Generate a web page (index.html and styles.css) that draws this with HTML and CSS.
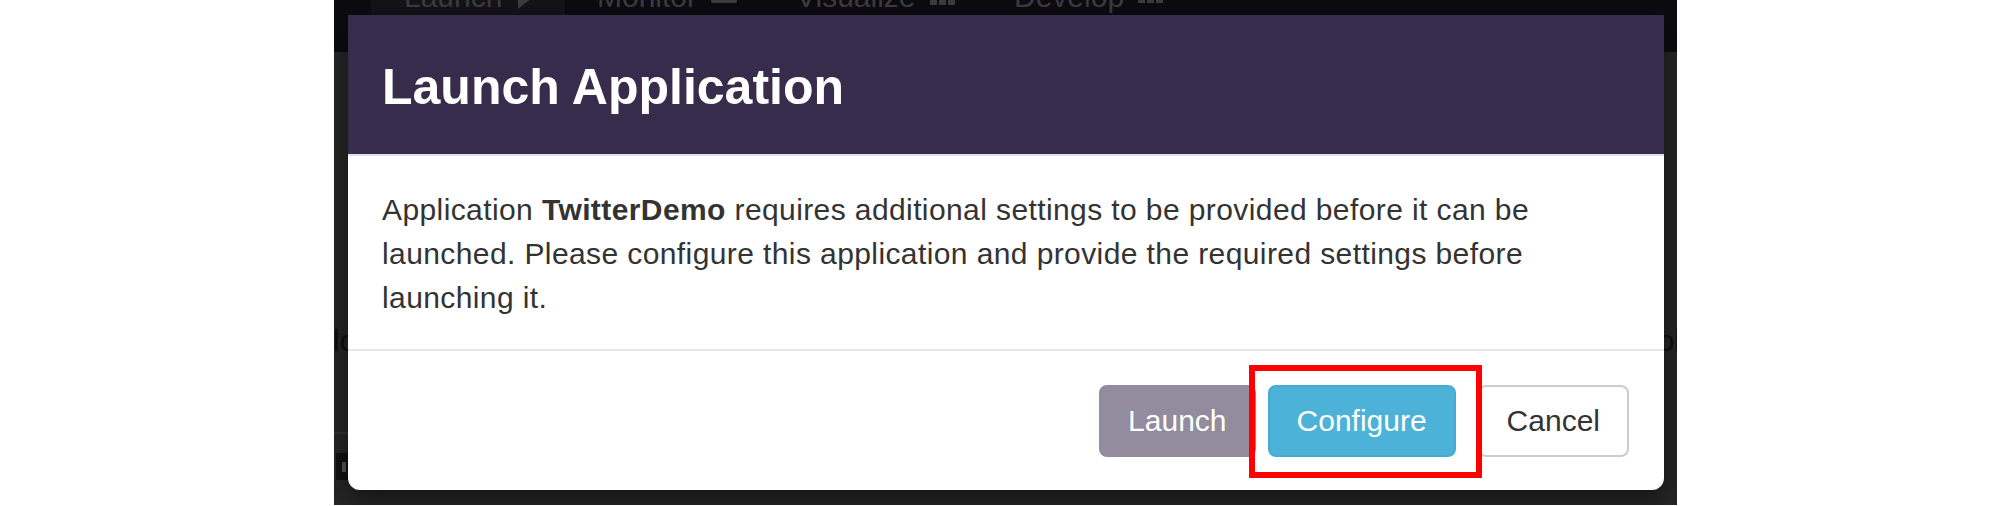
FILE: index.html
```html
<!DOCTYPE html>
<html lang="en">
<head>
<meta charset="utf-8">
<title>Launch Application</title>
<link rel="stylesheet" href="styles.css">
</head>
<body>
<div class="screen">
  <div class="navbar">
    <div class="nav-item nav-active w1"><span class="nav-label">Launch <svg class="nav-icon" width="16" height="22" viewBox="0 0 16 22"><path d="M1 0 L15 11 L1 22 Z" fill="#3d3c42"/></svg></span></div>
    <div class="nav-item w2"><span class="nav-label">Monitor <svg class="nav-icon" width="26" height="22" viewBox="0 0 26 22"><rect x="0" y="2" width="26" height="14" rx="2" fill="#3d3c42"/></svg></span></div>
    <div class="nav-item w3"><span class="nav-label">Visualize <svg class="nav-icon" width="26" height="22" viewBox="0 0 26 22"><rect x="0" y="4" width="7" height="14" fill="#3d3c42"/><rect x="9" y="0" width="7" height="18" fill="#3d3c42"/><rect x="18" y="6" width="7" height="12" fill="#3d3c42"/></svg></span></div>
    <div class="nav-item w4"><span class="nav-label">Develop <svg class="nav-icon" width="26" height="22" viewBox="0 0 26 22"><rect x="0" y="6" width="7" height="10" fill="#3d3c42"/><rect x="9" y="6" width="7" height="10" fill="#3d3c42"/><rect x="18" y="6" width="7" height="10" fill="#3d3c42"/></svg></span></div>
  </div>
  <div class="page">
    <div class="page-row">
      <span class="page-text">lo</span>
      <span class="page-text">ol</span>
    </div>
    <div class="page-rule"></div>
    <div class="page-block"><span class="page-chip"></span></div>
  </div>

  <div class="modal">
    <div class="modal-header">
      <h4 class="modal-title">Launch Application</h4>
    </div>
    <div class="modal-body">
      <p class="modal-text">Application <strong>TwitterDemo</strong> requires additional settings to be provided before it can be launched. Please configure this application and provide the required settings before launching it.</p>
    </div>
    <div class="modal-footer">
      <button class="btn btn-launch">Launch</button>
      <span class="highlight-wrap">
        <button class="btn btn-configure">Configure</button>
        <span class="highlight"></span>
      </span>
      <button class="btn btn-cancel">Cancel</button>
    </div>
  </div>
</div>
</body>
</html>
```

FILE: styles.css
```css
html, body {
  margin: 0;
  padding: 0;
}
body {
  background: #ffffff;
  width: 2013px;
  height: 506px;
  overflow: hidden;
  font-family: "Liberation Sans", Arial, Helvetica, sans-serif;
}
.screen {
  margin-left: 334px;
  width: 1343px;
  height: 505px;
  background: #262626;
  position: relative;
  overflow: hidden;
}
.navbar {
  height: 52px;
  background: #0c0b10;
  display: flex;
  padding-left: 37px;
}
.nav-item {
  height: 52px;
  padding-left: 33px;
  box-sizing: border-box;
  overflow: hidden;
}
.nav-active {
  background: #141318;
}
.w1 { width: 194px; }
.w2 { width: 199px; padding-left: 32px; }
.w3 { width: 218px; padding-left: 32px; }
.w4 { width: 200px; padding-left: 32px; }
.nav-label {
  display: block;
  margin-top: -20px;
  font-size: 30px;
  line-height: 34px;
  color: #3d3c42;
  white-space: nowrap;
}
.nav-icon {
  vertical-align: -2px;
  margin-left: 6px;
}
.page {
  padding-top: 272px;
}
.page-row {
  display: flex;
  justify-content: space-between;
  font-size: 30px;
  line-height: 34px;
  color: #0e0e0e;
}
.page-text {
  display: block;
}
.page-row .page-text:first-child {
  margin-left: -1px;
}
.page-row .page-text:last-child {
  margin-right: -4px;
}
.page-rule {
  margin-top: 74px;
  height: 2px;
  background: #333333;
  width: 20px;
}
.page-block {
  margin-top: 19px;
  margin-left: 2px;
  width: 20px;
  height: 27px;
  background: #111111;
  display: flex;
  align-items: center;
}
.page-chip {
  display: block;
  width: 4px;
  height: 10px;
  margin-left: 6px;
  background: #555555;
}

.modal {
  position: absolute;
  left: 14px;
  top: 15px;
  width: 1316px;
  background: #ffffff;
  border-radius: 0 0 12px 12px;
  box-shadow: 0 10px 30px rgba(0, 0, 0, 0.5);
}
.modal-header {
  background: #382c4c;
  padding: 38px 34px 33px;
  border-bottom: 2px solid #e2e0e6;
}
.modal-title {
  margin: 0;
  font-size: 50px;
  line-height: 68px;
  font-weight: 700;
  letter-spacing: 0;
  color: #ffffff;
}
.modal-body {
  padding: 32px 34px 29px;
}
.modal-text {
  margin: 0;
  max-width: 1210px;
  font-size: 30px;
  line-height: 44px;
  letter-spacing: 0.4px;
  color: #333333;
}
.modal-text strong {
  font-weight: 700;
}
.modal-footer {
  border-top: 2px solid #e5e5e5;
  padding: 34px 35px 33px;
  display: flex;
  justify-content: flex-end;
  align-items: flex-start;
}
.btn {
  display: block;
  height: 72px;
  box-sizing: border-box;
  padding: 0 27px;
  border: 2px solid transparent;
  border-radius: 8px;
  font-family: "Liberation Sans", Arial, Helvetica, sans-serif;
  font-size: 30px;
  line-height: 68px;
  margin: 0;
  cursor: pointer;
}
.btn-launch {
  background: #928c9e;
  border-color: #928c9e;
  color: #ffffff;
}
.highlight-wrap {
  position: relative;
  display: block;
  margin-left: 12px;
}
.btn-configure {
  background: #4cb2d7;
  border-color: #46abd1;
  color: #ffffff;
}
.highlight {
  position: absolute;
  left: -19px;
  top: -20px;
  width: 233px;
  height: 113px;
  box-sizing: border-box;
  border: 6px solid #ff0000;
  pointer-events: none;
}
.btn-cancel {
  margin-left: 22px;
  background: #ffffff;
  border-color: #cccccc;
  color: #333333;
}
```
